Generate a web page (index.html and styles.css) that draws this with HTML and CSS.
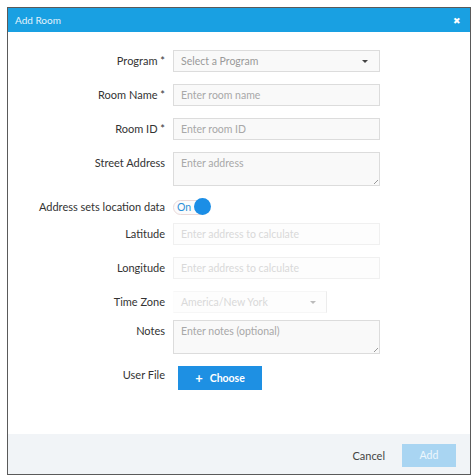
FILE: index.html
```html
<!DOCTYPE html>
<html>
<head>
<meta charset="utf-8">
<link rel="stylesheet" href="styles.css">
</head>
<body>
<div class="dialog">
  <div class="header">
    <span class="title">Add Room</span>
    <span class="close">&#x2716;</span>
  </div>
  <div class="body">
    <div class="row">
      <label class="lbl">Program *</label>
      <div class="field select"><span class="ph">Select a Program</span><span class="caret"></span></div>
    </div>
    <div class="row">
      <label class="lbl">Room Name *</label>
      <div class="field"><span class="ph">Enter room name</span></div>
    </div>
    <div class="row">
      <label class="lbl">Room ID *</label>
      <div class="field"><span class="ph">Enter room ID</span></div>
    </div>
    <div class="row">
      <label class="lbl">Street Address</label>
      <div class="field area"><span class="ph">Enter address</span><span class="grip"></span></div>
    </div>
    <div class="row r-toggle">
      <label class="lbl">Address sets location data</label>
      <div class="toggle"><span class="on">On</span><span class="knob"></span></div>
    </div>
    <div class="row">
      <label class="lbl">Latitude</label>
      <div class="field disabled"><span class="ph">Enter address to calculate</span></div>
    </div>
    <div class="row">
      <label class="lbl">Longitude</label>
      <div class="field disabled"><span class="ph">Enter address to calculate</span></div>
    </div>
    <div class="row r-tz">
      <label class="lbl">Time Zone</label>
      <div class="field select disabled tz"><span class="ph">America/New York</span><span class="caret"></span></div>
    </div>
    <div class="row">
      <label class="lbl">Notes</label>
      <div class="field area"><span class="ph">Enter notes (optional)</span><span class="grip"></span></div>
    </div>
    <div class="row">
      <label class="lbl lbl-file">User File</label>
      <button class="choose"><span class="plus">+</span>Choose</button>
    </div>
  </div>
  <div class="footer">
    <button class="cancel">Cancel</button>
    <button class="add">Add</button>
  </div>
</div>
</body>
</html>
```
FILE: styles.css
```css
html, body {
  margin: 0;
  padding: 0;
  background: #ffffff;
}
body {
  padding: 7px 2px 1px 7px;
  font-family: Lato, "Open Sans", sans-serif;
  font-size: 11px;
  color: #333;
}
.dialog {
  width: 462px;
  height: 466px;
  border: 1px solid #5a5a5a;
  display: flex;
  flex-direction: column;
  background: #fff;
}
.header {
  height: 24px;
  background: #19a0e2;
  display: flex;
  align-items: center;
  justify-content: space-between;
  padding: 0 9px 0 7px;
  color: #fff;
}
.title {
  font-size: 10px;
  color: #e3f3fc;
}
.close {
  font-size: 9px;
  color: #fff;
}
.body {
  flex: 1;
  padding-top: 18px;
}
.row {
  display: flex;
  align-items: flex-start;
  margin-bottom: 12px;
}
.r-toggle { margin-bottom: 7px; }
.r-toggle .lbl { line-height: 18px; }
.r-tz { margin-bottom: 7px; }
.lbl {
  width: 165px;
  flex: none;
  text-align: right;
  line-height: 22px;
  padding-right: 8px;
  box-sizing: border-box;
  white-space: nowrap;
  color: #333;
}
.field {
  width: 207px;
  height: 22px;
  box-sizing: border-box;
  border: 1px solid #dcdcdc;
  background: #f9f9f9;
  display: flex;
  align-items: center;
  padding-left: 7px;
  position: relative;
}
.ph {
  color: #a8a8a8;
  font-size: 10.5px;
}
.select .ph { color: #999; }
.caret {
  position: absolute;
  right: 11px;
  top: 9px;
  width: 0;
  height: 0;
  border-left: 3px solid transparent;
  border-right: 3px solid transparent;
  border-top: 3px solid #444;
}
.area {
  height: 34px;
  align-items: flex-start;
  padding-top: 4px;
}
.grip {
  position: absolute;
  right: 1px;
  bottom: 1px;
  width: 4px;
  height: 4px;
  background: linear-gradient(135deg, transparent 50%, #999 50%, #999 62%, transparent 62%);
}
.disabled {
  border-color: #f0f0f0;
  background: #fdfdfd;
}
.disabled .ph { color: #d9d9d9; }
.tz {
  width: 154px;
  border-left-color: #fcfcfc;
  border-top-color: #f6f6f6;
  border-bottom-color: #f6f6f6;
  border-right-color: #ececec;
}
.tz .caret { border-top-color: #bbb; right: 10px; }
.toggle {
  width: 38px;
  height: 18px;
  display: flex;
  align-items: center;
  position: relative;
}
.toggle::before {
  content: "";
  position: absolute;
  left: 0;
  top: 2px;
  width: 34px;
  height: 13px;
  border: 1px solid #ead9d9;
  border-radius: 8px;
  background: #fbfbfb;
}
.on {
  position: relative;
  color: #2b8fd8;
  font-size: 10.5px;
  margin-left: 4px;
}
.knob {
  position: absolute;
  right: 0;
  top: 0;
  width: 17px;
  height: 17px;
  border-radius: 50%;
  background: #1b8ee6;
}
.lbl-file { line-height: 16px; padding-top: 1px; }
.choose {
  margin-left: 5px;
  width: 84px;
  height: 24px;
  border: none;
  background: #1e90e3;
  color: #fff;
  font-family: Lato, "Open Sans", sans-serif;
  font-size: 10.5px;
  font-weight: bold;
  display: flex;
  align-items: center;
  justify-content: center;
  padding: 0;
}
.plus {
  font-size: 13px;
  margin-right: 7px;
  font-weight: bold;
  line-height: 1;
}
.footer {
  height: 40px;
  background: #f1f4f7;
  display: flex;
  align-items: center;
  justify-content: flex-end;
  padding-right: 14px;
}
.cancel {
  border: none;
  background: transparent;
  font-family: Lato, "Open Sans", sans-serif;
  font-size: 11px;
  color: #444;
  padding: 0;
  margin-right: 17px;
  margin-top: 2px;
}
.add {
  width: 54px;
  height: 23px;
  border: none;
  background: #a9d5f2;
  color: #eef7fd;
  font-family: Lato, "Open Sans", sans-serif;
  font-size: 10.5px;
  padding: 0;
  margin-top: 2px;
}
```
